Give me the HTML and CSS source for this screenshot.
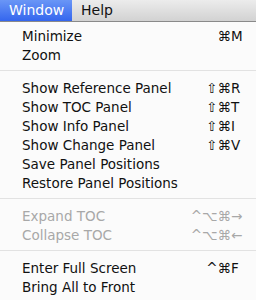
FILE: index.html
```html
<html>
<head>
    <meta charset="utf-8" />
    <link rel="stylesheet" href="styles.css">
</head>
<body>
    <div class="menubar">
        <div class="title active">Window</div>
        <div class="title">Help</div>
    </div>
    <div class="menu">
        <div class="item"><span class="label">Minimize</span><span class="keys"><span class="mods">⌘</span><span class="key">M</span></span></div>
        <div class="item"><span class="label">Zoom</span></div>
        <div class="sep"></div>
        <div class="item"><span class="label">Show Reference Panel</span><span class="keys"><span class="mods">⇧⌘</span><span class="key">R</span></span></div>
        <div class="item"><span class="label">Show TOC Panel</span><span class="keys"><span class="mods">⇧⌘</span><span class="key">T</span></span></div>
        <div class="item"><span class="label">Show Info Panel</span><span class="keys"><span class="mods">⇧⌘</span><span class="key">I</span></span></div>
        <div class="item"><span class="label">Show Change Panel</span><span class="keys"><span class="mods">⇧⌘</span><span class="key">V</span></span></div>
        <div class="item"><span class="label">Save Panel Positions</span></div>
        <div class="item"><span class="label">Restore Panel Positions</span></div>
        <div class="sep"></div>
        <div class="item disabled"><span class="label">Expand TOC</span><span class="keys"><span class="mods">^⌥⌘</span><span class="key">→</span></span></div>
        <div class="item disabled"><span class="label">Collapse TOC</span><span class="keys"><span class="mods">^⌥⌘</span><span class="key">←</span></span></div>
        <div class="sep"></div>
        <div class="item"><span class="label">Enter Full Screen</span><span class="keys"><span class="mods">^⌘</span><span class="key">F</span></span></div>
        <div class="item"><span class="label">Bring All to Front</span></div>
    </div>
</body>
</html>
```

FILE: styles.css
```css
body {
    margin: 0;
    width: 256px;
    height: 300px;
    overflow: hidden;
    background: #fbfbfb;
    font-family: "DejaVu Sans", "Liberation Sans", sans-serif;
    font-size: 13.5px;
    color: #111;
}

.menubar {
    display: flex;
    height: 21px;
    background: linear-gradient(#ececec, #d2d2d2);
    border-bottom: 1px solid #8a8a8a;
}

.menubar .title {
    padding: 0 9px;
    line-height: 21px;
    font-size: 14px;
    color: #111;
}

.menubar .title.active {
    width: 54px;
    background: linear-gradient(#6a96f6, #3466ee);
    color: #fff;
}

.menu {
    padding-top: 4px;
}

.item {
    display: flex;
    justify-content: space-between;
    align-items: center;
    height: 19px;
    padding: 0 13px 0 22px;
}

.item.disabled {
    color: #a8a8a8;
}

.keys {
    display: flex;
}

.mods {
    text-align: right;
}

.mods.shift {
    font-size: 15px;
}

.key {
    width: 12px;
    text-align: left;
}

.sep {
    height: 1px;
    margin: 6px 0 7px;
    background: #e2e2e2;
}
```
